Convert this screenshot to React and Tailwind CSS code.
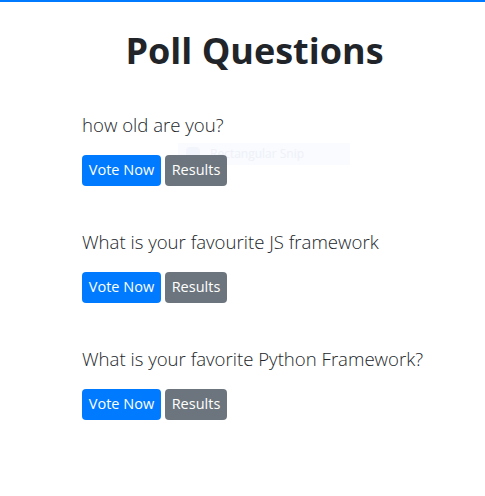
const POLLS = [
  { id: 1, question: 'how old are you?' },
  { id: 2, question: 'What is your favourite JS framework' },
  { id: 3, question: 'What is your favorite Python Framework?' },
];

function PollItem({ poll }) {
  return (
    <div className="mb-[41px]">
      <p className="text-[18.6px] font-light text-[#212529] leading-[30px] mb-[15px]">{poll.question}</p>
      <div className="flex gap-[4px]">
        <button className="w-[79px] h-[31px] rounded-[4px] bg-[#007bff] text-white text-[14.5px] leading-none">Vote Now</button>
        <button className="w-[62px] h-[31px] rounded-[4px] bg-[#6c757d] text-white text-[14.5px] leading-none">Results</button>
      </div>
    </div>
  );
}

export default function App() {
  return (
    <div className="relative min-h-[496px] bg-white border-t-2 border-[#007bff] font-['Open_Sans',sans-serif] text-[#212529]">
      {/* faint leftover of a snipping tool overlay, sits under the page content */}
      <div className="absolute left-[178px] top-[141px] w-[172px] h-[22px] bg-[#f9fbff] flex items-center">
        <span className="ml-[8px] w-[14px] h-[14px] rounded-sm bg-[#f2f5fb]" />
        <span className="ml-[10px] text-[12px] leading-none text-[#eef1f7]">Rectangular Snip</span>
      </div>
      <div className="relative pl-[82px] pr-[20px]">
        <h1 className="ml-[-38px] text-center text-[36px] font-bold leading-none pt-[31px] pb-[41px]">Poll Questions</h1>
        {POLLS.map(p => <PollItem key={p.id} poll={p} />)}
      </div>
    </div>
  );
}
